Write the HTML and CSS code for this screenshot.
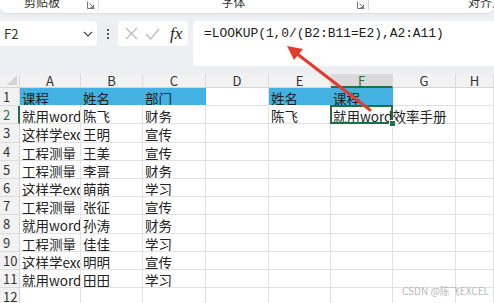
FILE: index.html
```html
<!DOCTYPE html>
<html lang="zh-CN">
<head>
    <meta charset="UTF-8">
    <title>LOOKUP</title>
    <link rel="stylesheet" href="styles.css">
</head>
<body>
    <div class="ribbon">
        <div class="ribbon-panel">
            <div class="group g1"><span class="group-label">剪贴板</span>
                <svg class="launcher" width="8" height="8" viewBox="0 0 8 8"><path d="M0.5 0.5v7h7" fill="none" stroke="#777"/><path d="M2.5 2.5l4 4M6.5 3.5v3h-3" fill="none" stroke="#777"/></svg>
            </div>
            <div class="group g2"><span class="group-label">字体</span>
                <svg class="launcher" width="8" height="8" viewBox="0 0 8 8"><path d="M0.5 0.5v7h7" fill="none" stroke="#777"/><path d="M2.5 2.5l4 4M6.5 3.5v3h-3" fill="none" stroke="#777"/></svg>
            </div>
            <div class="group g3"><span class="group-label">对齐方式</span></div>
        </div>
    </div>

    <div class="fbar">
        <div class="namebox">
            <span>F2</span>
            <svg width="10" height="6" viewBox="0 0 10 6"><path d="M1 1l4 4 4-4" fill="none" stroke="#444" stroke-width="1.2"/></svg>
        </div>
        <div class="dots"><i></i><i></i><i></i></div>
        <div class="fx-box">
            <svg width="13" height="13" viewBox="0 0 13 13"><path d="M1 1l11 11M12 1L1 12" stroke="#bbb" stroke-width="1.3"/></svg>
            <svg width="15" height="12" viewBox="0 0 15 12"><path d="M1 6l4.5 5L14 1" fill="none" stroke="#bbb" stroke-width="1.3"/></svg>
            <span class="fx">fx</span>
        </div>
        <div class="formula">=LOOKUP(1,0/(B2:B11=E2),A2:A11)</div>
    </div>

    <div class="sheet">
        <div class="hd corner"><svg width="10" height="10" viewBox="0 0 10 10"><path d="M10 0v10H0z" fill="#d4d4d4"/></svg></div>
        <div class="hd">A</div><div class="hd">B</div><div class="hd">C</div><div class="hd">D</div>
        <div class="hd">E</div><div class="hd sel">F</div><div class="hd">G</div><div class="hd">H</div>

        <div class="rh">1</div><div class="c blue">课程</div><div class="c blue">姓名</div><div class="c blue">部门</div><div class="c"></div><div class="c blue">姓名</div><div class="c blue">课程</div><div class="c"></div><div class="c"></div>
        <div class="rh sel">2</div><div class="c">就用word效率手册</div><div class="c">陈飞</div><div class="c">财务</div><div class="c"></div><div class="c">陈飞</div><div class="c active">就用word效率手册</div><div class="c"></div><div class="c"></div>
        <div class="rh">3</div><div class="c">这样学excel</div><div class="c">王明</div><div class="c">宣传</div><div class="c"></div><div class="c"></div><div class="c"></div><div class="c"></div><div class="c"></div>
        <div class="rh">4</div><div class="c">工程测量</div><div class="c">王美</div><div class="c">宣传</div><div class="c"></div><div class="c"></div><div class="c"></div><div class="c"></div><div class="c"></div>
        <div class="rh">5</div><div class="c">工程测量</div><div class="c">李哥</div><div class="c">财务</div><div class="c"></div><div class="c"></div><div class="c"></div><div class="c"></div><div class="c"></div>
        <div class="rh">6</div><div class="c">这样学excel</div><div class="c">萌萌</div><div class="c">学习</div><div class="c"></div><div class="c"></div><div class="c"></div><div class="c"></div><div class="c"></div>
        <div class="rh">7</div><div class="c">工程测量</div><div class="c">张征</div><div class="c">宣传</div><div class="c"></div><div class="c"></div><div class="c"></div><div class="c"></div><div class="c"></div>
        <div class="rh">8</div><div class="c">就用word效率手册</div><div class="c">孙涛</div><div class="c">财务</div><div class="c"></div><div class="c"></div><div class="c"></div><div class="c"></div><div class="c"></div>
        <div class="rh">9</div><div class="c">工程测量</div><div class="c">佳佳</div><div class="c">学习</div><div class="c"></div><div class="c"></div><div class="c"></div><div class="c"></div><div class="c"></div>
        <div class="rh">10</div><div class="c">这样学excel</div><div class="c">明明</div><div class="c">宣传</div><div class="c"></div><div class="c"></div><div class="c"></div><div class="c"></div><div class="c"></div>
        <div class="rh">11</div><div class="c">就用word效率手册</div><div class="c">田田</div><div class="c">学习</div><div class="c"></div><div class="c"></div><div class="c"></div><div class="c"></div><div class="c"></div>
        <div class="rh">12</div><div class="c"></div><div class="c"></div><div class="c"></div><div class="c"></div><div class="c"></div><div class="c"></div><div class="c"></div><div class="c"></div>
    </div>

    <!-- 红色箭头 -->
    <svg class="arrow" width="494" height="303" viewBox="0 0 494 303">
        <path d="M370 110L296 53" stroke="#e53b2c" stroke-width="3" stroke-linecap="round"/>
        <path d="M287 46L303 49L294 60z" fill="#e53b2c"/>
    </svg>

    <div class="watermark">CSDN @陈飞EXCEL</div>
</body>
</html>
```

FILE: styles.css
```css
body {
    margin: 0;
    width: 494px;
    height: 303px;
    overflow: hidden;
    background: #edeff2;
    font-family: "Noto Sans CJK SC", "Noto Sans", sans-serif;
    color: #222;
    position: relative;
}
.ribbon {
    height: 14px;
}
.ribbon-panel {
    height: 13px;
    background: #fff;
    border-radius: 0 0 7px 7px;
    box-shadow: 0 1px 2px rgba(0,0,0,0.08);
    display: flex;
    overflow: hidden;
}
.group {
    position: relative;
    border-right: 1px solid #d6d6d6;
    height: 10px;
    display: flex;
    justify-content: center;
}
.g1 { width: 98px; }
.g2 { width: 269px; }
.g3 { flex: 1; border-right: none; justify-content: flex-end; padding-right: 0; }
.group-label {
    font-size: 12px;
    line-height: 12px;
    margin-top: -4px;
    color: #333;
}
.g1 .group-label { margin-right: 14px; }
.g3 .group-label { margin-right: -22px; }
.launcher {
    position: absolute;
    right: 3px;
    top: 1px;
}
.fbar {
    display: flex;
    align-items: flex-start;
    margin-top: 7px;
    height: 45px;
    margin-bottom: 8px;
}
.namebox {
    width: 97px;
    height: 25px;
    background: #fff;
    border-radius: 0 4px 4px 0;
    display: flex;
    align-items: center;
    justify-content: space-between;
    padding: 0 4px 0 4px;
    box-sizing: border-box;
    font-size: 13px;
    color: #333;
}
.namebox svg { margin-top: 1px; }
.dots {
    width: 21px;
    height: 25px;
    display: flex;
    flex-direction: column;
    align-items: center;
    justify-content: center;
    gap: 2px;
}
.dots i {
    width: 2px;
    height: 2px;
    background: #555;
}
.fx-box {
    width: 70px;
    height: 25px;
    background: #fff;
    border-radius: 4px;
    display: flex;
    align-items: center;
    gap: 7px;
    padding-left: 7px;
    box-sizing: border-box;
}
.fx {
    font-family: "Liberation Serif", serif;
    font-style: italic;
    font-size: 17px;
    color: #222;
    margin-left: 3px;
}
.formula {
    flex: 1;
    margin-left: 5px;
    height: 45px;
    background: #fff;
    border-radius: 4px 0 0 4px;
    padding: 5px 0 0 11px;
    box-sizing: border-box;
    font-family: "Liberation Mono", "DejaVu Sans Mono", monospace;
    font-size: 12.9px;
    line-height: 16px;
    color: #1a1a1a;
}
.sheet {
    display: grid;
    grid-template-columns: 20px 61px 62px 63px 63px 62px 62px 63px 1fr;
    grid-template-rows: 14px;
    grid-auto-rows: 18.2px;
    background: #fff;
}
.hd {
    background: #f2f2f2;
    border-right: 1px solid #dcdcdc;
    border-bottom: 1px solid #d4d4d4;
    font-size: 13px;
    line-height: 14px;
    text-align: center;
    color: #333;
    overflow: hidden;
}
.hd.corner {
    display: flex;
    align-items: flex-end;
    justify-content: flex-end;
    padding: 0 2px 2px 0;
}
.hd.sel {
    background: #d9d9d9;
    color: #1e7145;
    border-bottom: 2px solid #1e7145;
}
.rh {
    background: #f2f2f2;
    border-right: 1px solid #d4d4d4;
    border-bottom: 1px solid #dcdcdc;
    font-size: 13px;
    line-height: 18px;
    padding-left: 3px;
    color: #333;
}
.rh.sel {
    color: #1e7145;
    border-right: 2px solid #1e7145;
}
.c {
    border-right: 1px solid #e2e2e2;
    border-bottom: 1px solid #e2e2e2;
    font-size: 13.5px;
    line-height: 18px;
    padding: 1px 0 0 2px;
    white-space: nowrap;
    overflow: hidden;
    position: relative;
}
.c.blue {
    background: #43b1e1;
    border-right-color: #43b1e1;
    border-bottom-color: #fff;
}
.c.active {
    overflow: visible;
    z-index: 2;
}
.c.active::after {
    content: "";
    position: absolute;
    left: -1px;
    top: -1px;
    right: -1px;
    bottom: -1px;
    border: 2px solid #1e7145;
}
.c.active::before {
    content: "";
    position: absolute;
    right: -4px;
    bottom: -4px;
    width: 5px;
    height: 5px;
    background: #1e7145;
    border: 1px solid #fff;
    z-index: 3;
}
.arrow {
    position: absolute;
    left: 0;
    top: 0;
    pointer-events: none;
    z-index: 5;
}
.watermark {
    position: absolute;
    right: 5px;
    bottom: 5px;
    font-size: 10px;
    color: #b8b8b8;
    z-index: 4;
}
```
